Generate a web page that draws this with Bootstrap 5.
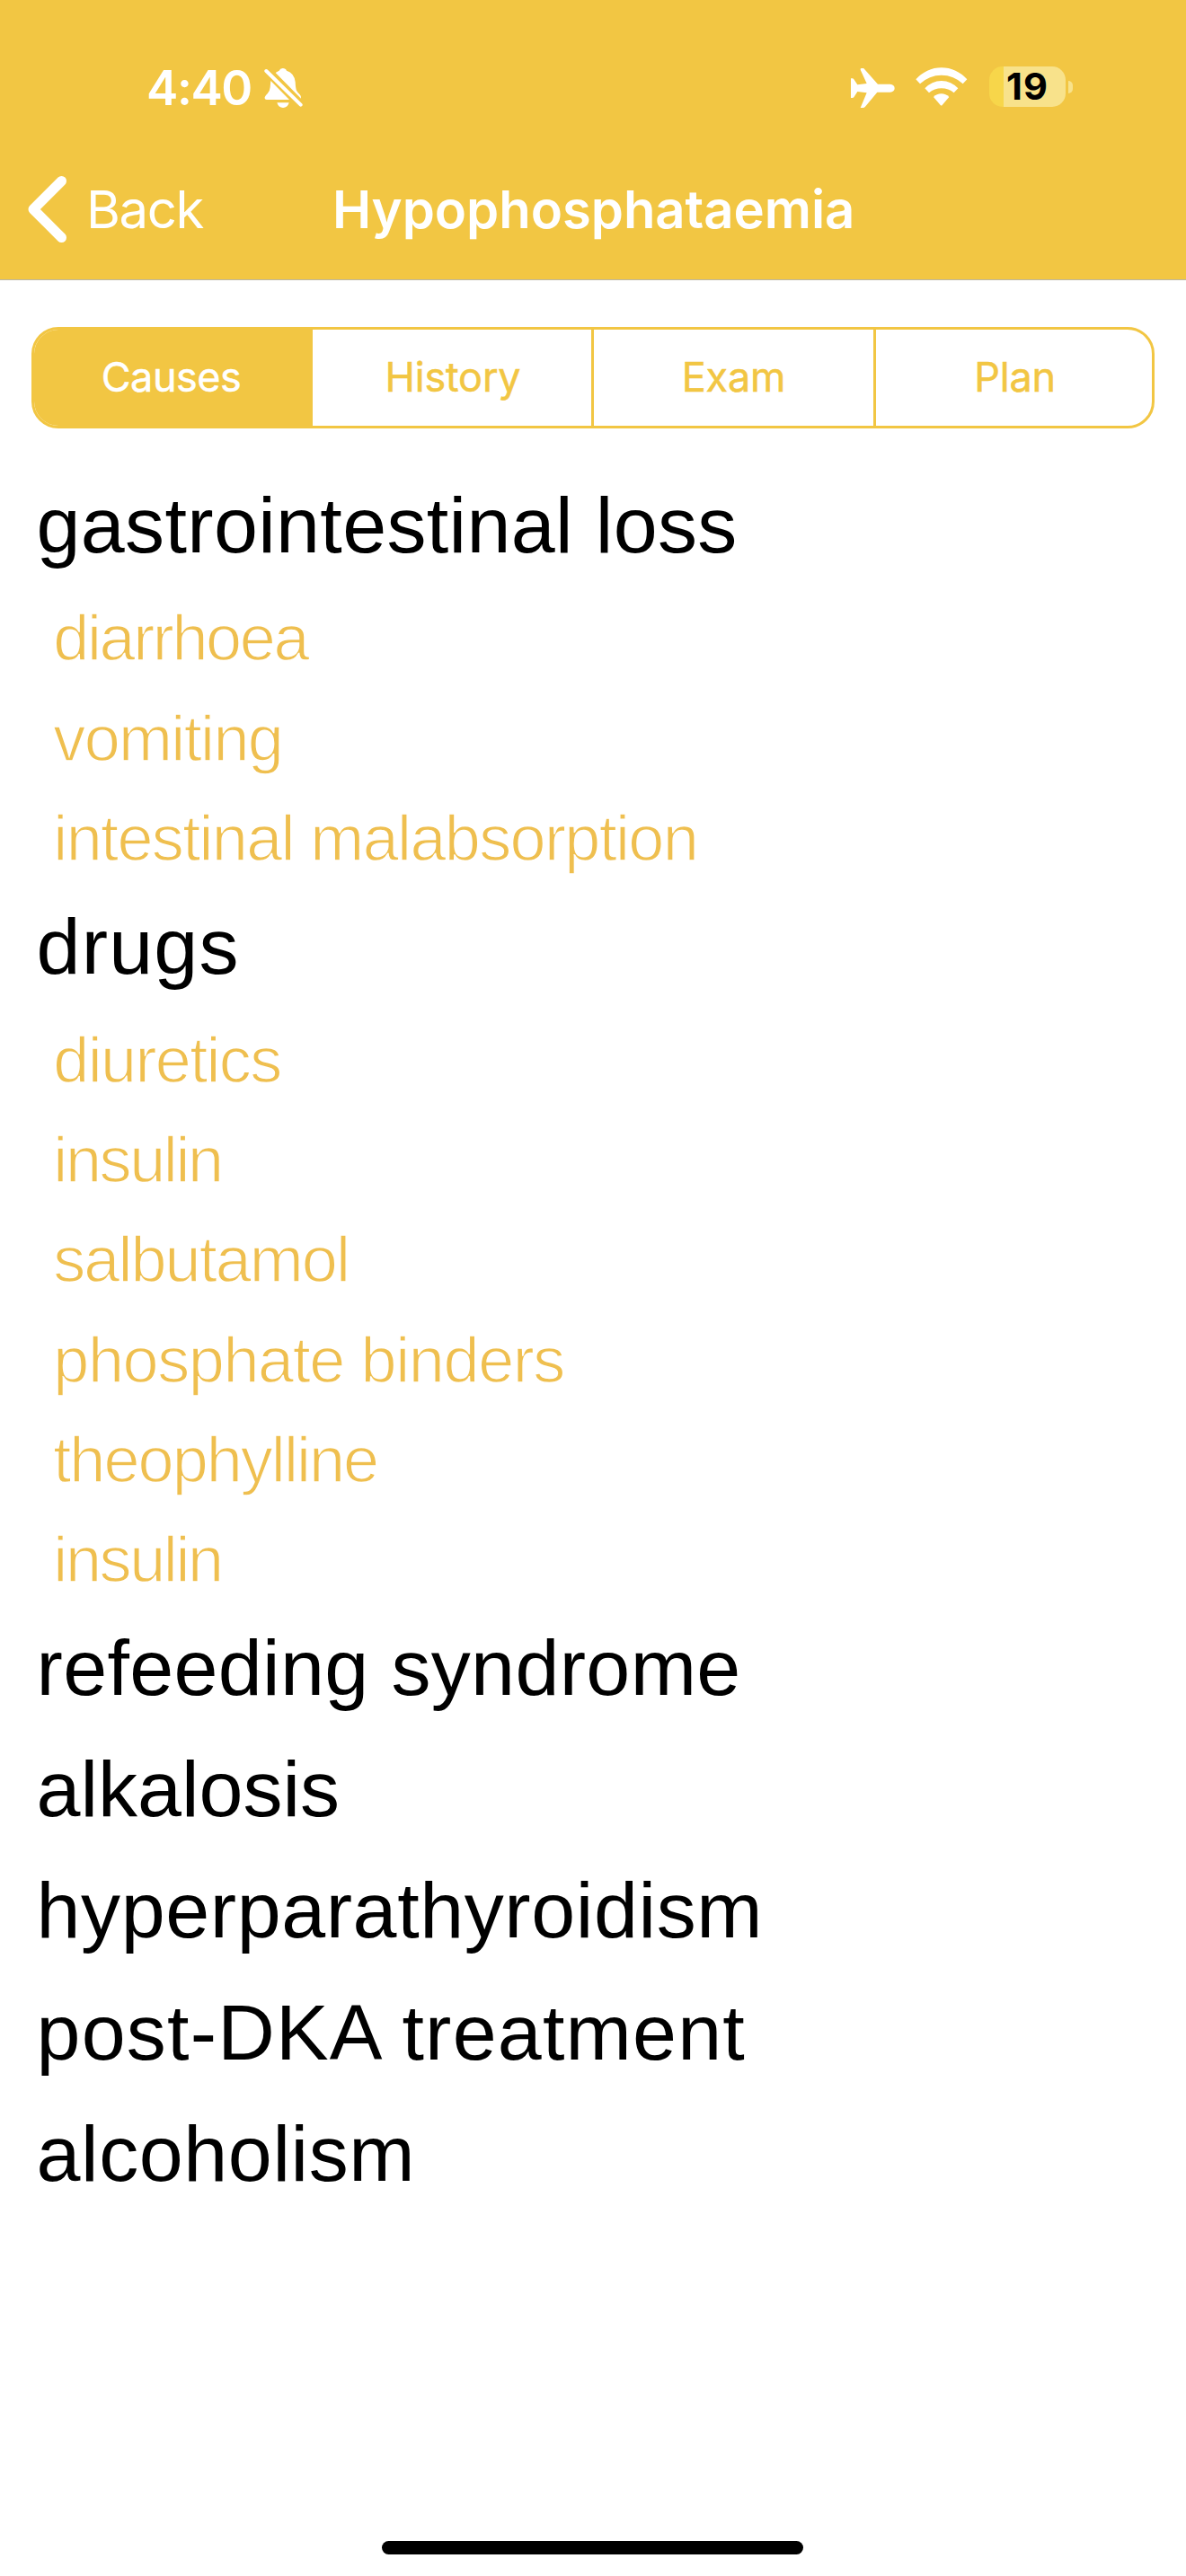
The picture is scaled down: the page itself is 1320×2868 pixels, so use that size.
<!DOCTYPE html>
<html lang="en">
<head>
<meta charset="utf-8">
<meta name="viewport" content="width=device-width, initial-scale=1">
<title>Hypophosphataemia</title>
<link href="https://cdn.jsdelivr.net/npm/bootstrap@5.3.0/dist/css/bootstrap.min.css" rel="stylesheet">
<style>
  :root { --gold: #f2c643; --gold-text: #efbf4f; }
  body { font-family: Inter, "Liberation Sans", sans-serif; background: #fff; color: #000; }
  .screen { height: 2868px; overflow: hidden; }
  .top-area { background: var(--gold); height: 312px; border-bottom: 1px solid #b9b6a6; color: #fff; }

  .status-row { height: 180px; padding: 16px 126px 0 163px; }
  .clock { width: 131px; font-size: 53px; font-weight: 600; letter-spacing: -1.4px; line-height: 60px; }
  .status-icons { gap: 23px; }
  .raised { padding-bottom: 3px; }
  .battery-body { width: 85px; height: 45px; border-radius: 15px; background: linear-gradient(90deg, #f7d64a 16px, #f8e28b 16px); color: #000; font-size: 41.5px; font-weight: 700; letter-spacing: 1px; line-height: 45px; }
  .battery-cap { width: 5px; height: 14px; margin-left: 3px; border-radius: 0 5px 5px 0; background: #f8e28b; }

  .title-row { height: 131px; padding: 0 30px 25px; line-height: 70px; font-size: 58px; }
  .back-link { color: #fff; letter-spacing: -1.4px; gap: 21px; }
  .page-title { font-size: 58px; font-weight: 600; line-height: 70px; letter-spacing: -.05px; margin-left: 144px; }

  .segments { margin: 52px 35px 0; height: 113px; border: 3px solid var(--gold); border-radius: 30px; overflow: hidden; }
  .segments .btn { --bs-btn-color: var(--gold); --bs-btn-active-color: #fff; --bs-btn-active-bg: var(--gold); --bs-btn-border-width: 0; --bs-btn-border-radius: 0; flex: 0 0 310px; font-size: 45px; font-weight: 400; line-height: 60px; padding: 0 0 1px 2px; letter-spacing: -.2px; -webkit-text-stroke: .5px currentColor; }
  .segments .btn.active { padding: 0 5px 1px 0; letter-spacing: -.5px; }
  .segments .btn.divided { border-left: 3px solid var(--gold); }
  .segments .btn.stretch { flex: 1 1 0; padding-left: 0; }

  .causes { margin-top: 39.5px; padding-left: 40.5px; font-family: "Liberation Sans", Arial, sans-serif; white-space: nowrap; }
  .cause { font-size: 88px; line-height: 135.3px; height: 135.3px; letter-spacing: .35px; }
  .detail { font-size: 72px; line-height: 103.6px; height: 111.3px; padding: 7.7px 0 0 18.8px; color: var(--gold-text); letter-spacing: -1.65px; -webkit-text-stroke: 1.4px #fff; }
  .ls-open { letter-spacing: 1.2px; }
  .ls-wide { letter-spacing: .6px; }
  .ls-none { letter-spacing: 0; }
  .ls-snug { letter-spacing: -1.4px; }
  .ls-tight { letter-spacing: -1.95px; }
  .ls-tighter { letter-spacing: -2.38px; }

  .home-bar { width: 469px; height: 15px; border-radius: 8px; background: #000; margin-bottom: 24px; margin-left: -1px; }
</style>
<script src="https://cdn.jsdelivr.net/npm/bootstrap@5.3.0/dist/js/bootstrap.bundle.min.js"></script>
</head>
<body>
<div class="screen d-flex flex-column">
  <header class="top-area">
    <div class="status-row d-flex align-items-center justify-content-between">
      <div class="d-flex align-items-center">
        <span class="clock">4:40</span>
        <svg width="43" height="46" viewBox="31 33 129 138" fill="#fff" aria-label="Silent">
          <path d="M53 78 115 141H40Q32 141 33 133 35 127 42 121 50 113 51 100Z"/>
          <path d="M69 51Q76 46 81 44 84 36 93 36 103 36 106 44 132 52 135 82 136 104 139 110 143 117 150 124 156 130 154 137Z"/>
          <path d="M74 151H114Q109 168 94 168T74 151Z"/>
          <path d="M38 45 153 158" stroke="#fff" stroke-width="12" stroke-linecap="round"/>
        </svg>
      </div>
      <div class="status-icons d-flex align-items-center">
        <svg width="49" height="44" viewBox="21 30 147 132" fill="#fff" aria-label="Airplane mode">
          <path d="M111 83H152Q167 85 167 96.500 167 108 152 110H109L69 158Q66 162 61 162H53L74 112 43 108 31 127Q29 129 26 129H21V64H26Q29 64 31 67L43 85 74 81 53 35Q52 31 56 30H61Q65 30 67 34Z"/>
        </svg>
        <div class="raised d-flex align-items-center">
          <svg class="me-4" width="58" height="43" viewBox="239 26 174 129" fill="#fff" aria-label="Wi-Fi">
            <path d="M240 66A113 113 0 0 1 411 66L397 81A104 104 0 0 0 254 81Z"/>
            <path d="M270 96A74 74 0 0 1 381 96L367 111A65 65 0 0 0 284 111Z"/>
            <path d="M299 125A36 36 0 0 1 351 125L328 152Q325 155 322 152Z"/>
          </svg>
          <div class="battery-body text-center">19</div>
          <div class="battery-cap"></div>
        </div>
      </div>
    </div>
    <nav class="title-row d-flex align-items-center">
      <a class="back-link d-flex align-items-center text-decoration-none" href="#">
        <svg width="45" height="76" viewBox="0 0 45 76" fill="none" stroke="#fff" stroke-width="11" stroke-linecap="round" stroke-linejoin="round"><path d="M38.500 6.500 7 38 38.500 69.500"/></svg>
        Back
      </a>
      <h1 class="page-title mb-0">Hypophosphataemia</h1>
    </nav>
  </header>

  <div class="segments d-flex" role="group">
    <button type="button" class="btn active">Causes</button>
    <button type="button" class="btn">History</button>
    <button type="button" class="btn divided stretch">Exam</button>
    <button type="button" class="btn divided">Plan</button>
  </div>

  <ul class="causes list-unstyled mb-0">
    <li class="cause">gastrointestinal loss</li>
    <li class="detail ls-tighter">diarrhoea</li>
    <li class="detail">vomiting</li>
    <li class="detail">intestinal malabsorption</li>
    <li class="cause ls-open">drugs</li>
    <li class="detail">diuretics</li>
    <li class="detail ls-tighter">insulin</li>
    <li class="detail ls-tight">salbutamol</li>
    <li class="detail ls-snug">phosphate binders</li>
    <li class="detail ls-tight">theophylline</li>
    <li class="detail ls-tighter">insulin</li>
    <li class="cause">refeeding syndrome</li>
    <li class="cause ls-none">alkalosis</li>
    <li class="cause ls-wide">hyperparathyroidism</li>
    <li class="cause ls-open">post-DKA treatment</li>
    <li class="cause ls-wide">alcoholism</li>
  </ul>

  <div class="home-bar mt-auto align-self-center"></div>
</div>
</body>
</html>
